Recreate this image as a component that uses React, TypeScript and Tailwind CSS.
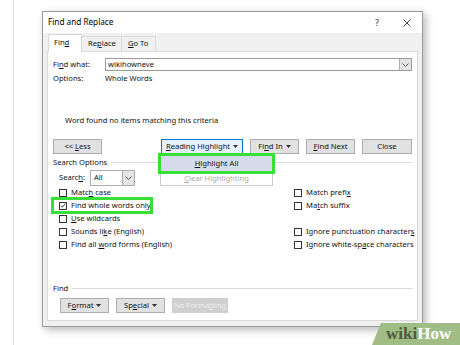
import React from "react";

const U = ({ children }: { children: React.ReactNode }) => <span className="underline underline-offset-[1px]">{children}</span>;

const Tri = () => (
  <svg width="5" height="3" viewBox="0 0 5 3" className="ml-[3px] inline-block">
    <path d="M0 0 H5 L2.5 3 Z" fill="#333" />
  </svg>
);

const Chevron = () => (
  <svg width="7" height="4" viewBox="0 0 7 4">
    <path d="M0.5 0.5 L3.5 3.5 L6.5 0.5" fill="none" stroke="#444" strokeWidth="0.9" />
  </svg>
);

const Box = ({ checked }: { checked?: boolean }) => (
  <div className="w-[8px] h-[8px] border border-[#333] bg-white flex items-center justify-center shrink-0">
    {checked && (
      <svg width="7" height="7" viewBox="0 0 7 7">
        <path d="M0.8 3.6 L2.7 5.5 L6.2 1.2" fill="none" stroke="#222" strokeWidth="1" />
      </svg>
    )}
  </div>
);

const Check = ({ children, checked, cls = "" }: { children: React.ReactNode; checked?: boolean; cls?: string }) => (
  <div className={"h-[13px] flex items-center gap-[4px] " + cls}>
    <Box checked={checked} />
    <span className="whitespace-nowrap">{children}</span>
  </div>
);

const Btn = ({ children, w, cls = "" }: { children: React.ReactNode; w: string; cls?: string }) => (
  <div className={"h-[15px] flex items-center justify-center border border-[#adadad] bg-[#e1e1e1] whitespace-nowrap " + w + " " + cls}>
    {children}
  </div>
);

export default function App() {
  return (
    <div
      className="w-[460px] h-[345px] bg-white relative overflow-hidden flex text-[7.6px] text-[#111] leading-none"
      style={{ fontFamily: '"Noto Sans", "Liberation Sans", sans-serif' }}
    >
      <div className="w-[13px] shrink-0" />
      <div className="flex-1 border-l border-[#e4e4e4] pl-[28px] pt-[11px]">
        <div className="w-[381px] h-[316px] border border-[#9a9a9a] bg-[#f0f0f0] shadow-[3px_3px_8px_rgba(0,0,0,0.28)] flex flex-col">
          {/* title */}
          <div className="h-[21px] bg-white flex items-center pl-[5px] shrink-0">
            <span className="text-[8.2px] text-black">Find and Replace</span>
            <span className="ml-auto text-[9px] text-[#333] mr-[24px]">?</span>
            <svg width="8" height="8" viewBox="0 0 8 8" className="mr-[11px]">
              <path d="M0.5 0.5 L7.5 7.5 M7.5 0.5 L0.5 7.5" stroke="#333" strokeWidth="0.9" />
            </svg>
          </div>
          {/* tabs */}
          <div className="h-[18px] flex items-end pl-[5px] shrink-0 relative z-10">
            <div className="h-[18px] w-[34px] bg-white border border-b-0 border-[#d9d9d9] flex items-center pl-[5px] mb-[-1px] pb-[1px]">
              Fin<U>d</U>
            </div>
            <div className="h-[15px] w-[40px] border-t border-r border-[#d9d9d9] flex items-center pl-[6px]">
              Re<U>p</U>lace
            </div>
            <div className="h-[15px] w-[34px] border-t border-r border-[#d9d9d9] flex items-center pl-[6px]">
              <U>G</U>o To
            </div>
          </div>
          {/* panel */}
          <div className="mx-[4px] mb-[5px] flex-1 bg-white border border-[#d9d9d9] relative flex flex-col">
            <div className="mt-[6px] flex items-center h-[13px]">
              <span className="w-[57px] pl-[5px]">Fi<U>n</U>d what:</span>
              <div className="w-[307px] h-[13px] border border-[#9a9a9a] flex items-center pl-[2px]">
                <span>wikihowneve</span>
                <div className="ml-auto w-[12px] h-[11px] bg-[#e5e5e5] border-l border-[#adadad] flex items-center justify-center">
                  <Chevron />
                </div>
              </div>
            </div>
            <div className="mt-[2px] flex items-center h-[11px]">
              <span className="w-[57px] pl-[5px]">Options:</span>
              <span>Whole Words</span>
            </div>
            <div className="mt-[32px] pl-[17px] h-[10px] flex items-center">Word found no items matching this criteria</div>
            <div className="mt-[13px] flex items-center pl-[5px]">
              <Btn w="w-[49px]">{"<<\u00a0"}<U>L</U>ess</Btn>
              <Btn w="w-[82px]" cls="ml-[59px] !border-[#0078d7] !bg-[#e5f1fb]">
                <U>R</U>eading Highlight<Tri />
              </Btn>
              <Btn w="w-[49px]" cls="ml-[7px]">
                Fi<U>n</U>d In<Tri />
              </Btn>
              <Btn w="w-[49px]" cls="ml-[7px]">
                <U>F</U>ind Next
              </Btn>
              <Btn w="w-[50px]" cls="ml-[7px]">Close</Btn>
            </div>
            <div className="mt-[3px] flex items-center h-[11px] pl-[5px] pr-[4px]">
              <span>Search Options</span>
              <div className="flex-1 ml-[4px] h-px bg-[#dcdcdc]" />
            </div>
            <div className="mt-[2px] flex items-center h-[16px] pl-[11px]">
              <span className="w-[31px]">
                Searc<U>h</U>:
              </span>
              <div className="w-[45px] h-[16px] border border-[#adadad] flex items-center pl-[3px] bg-white">
                <span>All</span>
                <div className="ml-auto w-[12px] h-[14px] bg-[#e5e5e5] border-l border-[#adadad] flex items-center justify-center">
                  <Chevron />
                </div>
              </div>
            </div>
            <div className="flex pl-[11px]">
              <div className="w-[235px] flex flex-col">
                <Check>
                  Matc<U>h</U> case
                </Check>
                <Check checked cls="outline-[3px] outline-[#36e036] outline -outline-offset-[1px] w-[98px] -ml-[6px] pl-[6px]">
                  Find whole words onl<U>y</U>
                </Check>
                <Check>
                  <U>U</U>se wildcards
                </Check>
                <Check>
                  Sounds li<U>k</U>e (English)
                </Check>
                <Check>
                  Find all <U>w</U>ord forms (English)
                </Check>
              </div>
              <div className="flex flex-col">
                <Check>
                  Match prefi<U>x</U>
                </Check>
                <Check>
                  Ma<U>t</U>ch suffix
                </Check>
                <div className="h-[13px]" />
                <Check>
                  Ignore punctuation character<U>s</U>
                </Check>
                <Check>
                  Ignore white-sp<U>a</U>ce characters
                </Check>
              </div>
            </div>
            <div className="mt-[32px] flex items-center h-[11px] pl-[5px] pr-[4px]">
              <span>Find</span>
              <div className="flex-1 ml-[4px] h-px bg-[#dcdcdc]" />
            </div>
            <div className="mt-[4px] flex items-center pl-[12px] gap-[7px]">
              <Btn w="w-[49px]">
                F<U>o</U>rmat<Tri />
              </Btn>
              <Btn w="w-[49px]">
                Sp<U>e</U>cial<Tri />
              </Btn>
              <Btn w="w-[56px]" cls="!bg-[#cfcfcf] !border-[#cfcfcf] text-[#eeeeee]">
                No Forma<U>t</U>ting
              </Btn>
            </div>

            {/* dropdown menu */}
            <div className="absolute left-[112px] top-[101px] w-[113px] h-[33px] bg-white border border-[#cccccc] flex flex-col px-[2px] pt-[2px]">
              <div className="h-[15px] bg-[#d5dbe9] flex items-center justify-center outline-[3px] outline outline-[#36e036] -mx-[2px]">
                <U>H</U>ighlight All
              </div>
              <div className="h-[13px] flex items-center justify-center text-[#a8a8a8] mt-[1px]">
                <U>C</U>lear Highlighting
              </div>
            </div>
          </div>
        </div>
      </div>

      {/* wikiHow logo */}
      <div className="absolute right-0 bottom-0 w-[88px] h-[22px]">
        <svg width="88" height="22" viewBox="0 0 88 22" className="absolute inset-0">
          <path d="M9 0 H88 V22 H0 Z" fill="#9fbd85" />
        </svg>
        <div
          className="absolute left-[14px] top-[2px] text-[17px] font-bold leading-none"
          style={{ fontFamily: '"Liberation Serif", serif' }}
        >
          <span className="text-[#4d5a43]">wiki</span>
          <span className="text-white">How</span>
        </div>
      </div>
    </div>
  );
}
